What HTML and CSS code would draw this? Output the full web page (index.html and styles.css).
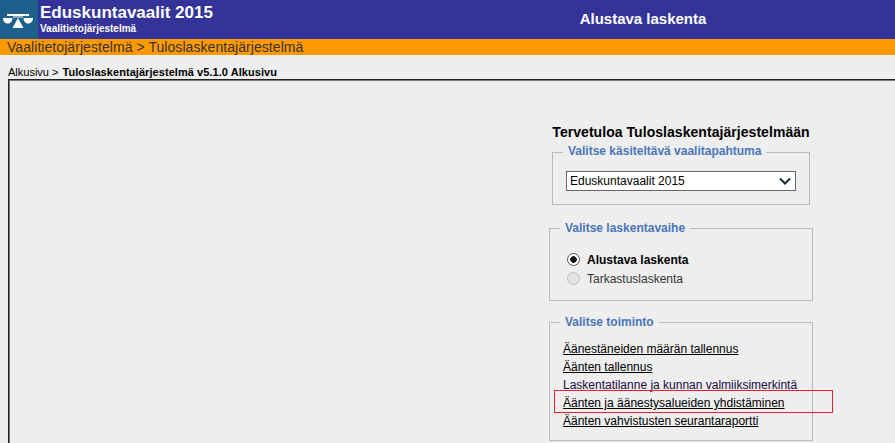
FILE: index.html
```html
<!DOCTYPE html>
<html lang="fi">
<head>
  <meta charset="UTF-8">
  <title>Alustava laskenta</title>
  <link rel="stylesheet" href="styles.css">
</head>
<body>
  <header class="top-bar">
    <div class="logo">
      <svg width="38" height="39" viewBox="0 0 38 39">
        <rect x="7" y="14" width="22" height="2" fill="#fff"/>
        <rect x="13" y="16.500" width="10" height="1" fill="#fff"/>
        <path d="M3 18h9.500c0 3-2 5.500-4.800 5.500S3 21 3 18zM23.500 18H33c0 3-2 5.500-4.800 5.500S23.500 21 23.500 18z" fill="#fff"/>
        <path d="M18 18l5.500 10h-11z" fill="#fff"/>
      </svg>
    </div>
    <div class="brand">
      <div class="brand-title">Eduskuntavaalit 2015</div>
      <div class="brand-sub">Vaalitietojärjestelmä</div>
    </div>
    <div class="phase">Alustava laskenta</div>
  </header>
  <div class="orange-bar">Vaalitietojärjestelmä &gt; Tuloslaskentajärjestelmä</div>
  <div class="breadcrumb">Alkusivu &gt; <b>Tuloslaskentajärjestelmä v5.1.0 Alkusivu</b></div>
  <main class="content">
    <div class="panel">
      <h1>Tervetuloa Tuloslaskentajärjestelmään</h1>
      <fieldset class="box box-event">
        <legend>Valitse käsiteltävä vaalitapahtuma</legend>
        <div class="select">
          <span>Eduskuntavaalit 2015</span>
          <svg width="12" height="8" viewBox="0 0 12 8"><path d="M1 1.500l5 5 5-5" fill="none" stroke="#1a2a3a" stroke-width="2"/></svg>
        </div>
      </fieldset>
      <fieldset class="box box-phase">
        <legend>Valitse laskentavaihe</legend>
        <div class="radio-row selected"><span class="radio"></span>Alustava laskenta</div>
        <div class="radio-row disabled"><span class="radio"></span>Tarkastuslaskenta</div>
      </fieldset>
      <fieldset class="box box-actions">
        <legend>Valitse toiminto</legend>
        <a href="#">Äänestäneiden määrän tallennus</a>
        <a href="#">Äänten tallennus</a>
        <a href="#" class="visited">Laskentatilanne ja kunnan valmiiksimerkintä</a>
        <a href="#">Äänten ja äänestysalueiden yhdistäminen</a>
        <a href="#">Äänten vahvistusten seurantaraportti</a>
        <span class="highlight"></span>
      </fieldset>
    </div>
  </main>
</body>
</html>
```

FILE: styles.css
```css
* {
  box-sizing: border-box;
}

html, body {
  height: 100%;
}

body {
  margin: 0;
  background: #eeeeee;
  color: #000;
  font-family: "Liberation Sans", Arial, sans-serif;
  font-size: 12px;
  overflow: hidden;
}

.top-bar {
  display: flex;
  height: 39px;
  background: #333399;
  color: #fff;
}

.logo {
  width: 38px;
  background: #1f5f8b;
}

.logo svg {
  display: block;
}

.brand {
  width: 447px;
  padding-left: 2px;
}

.brand-title {
  font-size: 17px;
  font-weight: bold;
  line-height: 18px;
  margin-top: 4px;
}

.brand-sub {
  font-size: 10px;
  font-weight: bold;
  line-height: 11px;
  margin-top: 1px;
}

.phase {
  width: 316px;
  text-align: center;
  font-size: 15px;
  font-weight: bold;
  line-height: 38px;
}

.orange-bar {
  height: 16px;
  padding-left: 7px;
  background: #ff9900;
  color: #333;
  font-size: 14px;
  letter-spacing: 0.060px;
  line-height: 16px;
}

.breadcrumb {
  height: 24px;
  padding: 11px 0 0 8px;
  font-size: 11px;
  line-height: 13px;
}

.breadcrumb b {
  margin-left: 1px;
  letter-spacing: 0.060px;
}

.content {
  height: 364px;
  margin-left: 8px;
  border-top: 1px solid #222;
  border-left: 1px solid #222;
  box-shadow: inset 1px 1px #777;
  padding-top: 45px;
}

.panel {
  position: relative;
  width: 264px;
  margin-left: 540px;
}

h1 {
  margin: 0;
  white-space: nowrap;
  text-align: center;
  font-size: 14px;
  font-weight: bold;
  letter-spacing: 0.050px;
  line-height: 14px;
}

.box {
  position: relative;
  margin: 0;
  border: 1px solid #bbbbbb;
  min-width: 0;
}

legend {
  color: #4a76b8;
  font-size: 12px;
  font-weight: bold;
  padding: 0 5px;
  line-height: 14px;
}

.box-event {
  width: 258px;
  height: 61px;
  margin: 5px 0 0 3px;
  padding: 11px 13px 0;
}

.box-event legend {
  margin-left: -3px;
  padding-bottom: 2px;
}

.select {
  display: flex;
  align-items: center;
  justify-content: space-between;
  height: 20px;
  padding: 0 4px 0 3px;
  background: #fff;
  border: 1px solid #666;
  font-size: 12px;
}

.box-phase {
  height: 80px;
  margin-top: 16px;
  padding: 16px 0 0 10px;
}

.box-phase legend {
  margin-left: 0;
}

.radio-row {
  display: flex;
  align-items: center;
  height: 19px;
  line-height: 19px;
  font-size: 12px;
}

.radio-row.selected {
  font-weight: bold;
}

.radio-row.disabled {
  color: #333;
}

.radio {
  width: 13px;
  height: 13px;
  margin: -2px 7px 0 7px;
  border: 1px solid #555;
  border-radius: 50%;
  background: #fff;
}

.selected .radio {
  background: radial-gradient(circle, #111 0 3px, #fff 3.500px);
}

.disabled .radio {
  border-color: #bbb;
  background: #e4e4e4;
}

.box-actions {
  height: 126px;
  margin-top: 14px;
  padding: 11px 0 0 13px;
}

.box-actions legend {
  margin-left: -3px;
}

.box-actions a {
  display: block;
  height: 18px;
  line-height: 18px;
  color: #000;
  font-size: 12px;
}

.box-actions a.visited {
  color: #220a44;
}

.highlight {
  position: absolute;
  left: 4px;
  top: 61px;
  width: 279px;
  height: 23px;
  border: 1px solid #e3222a;
}
```
